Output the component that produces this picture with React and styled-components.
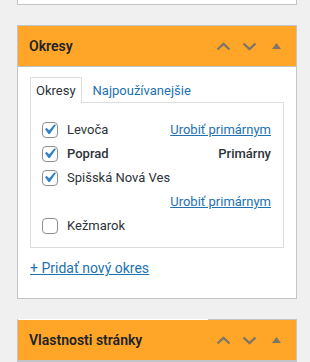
import styled, { createGlobalStyle } from 'styled-components';

const GlobalStyle = createGlobalStyle`
    body {
        margin: 0;
        background: #f0f0f1;
        font-family: Roboto, "Liberation Sans", sans-serif;
        color: #2c3338;
    }
`;

const okresy = [
    { name: 'Levoča', checked: true, action: 'link' },
    { name: 'Poprad', checked: true, action: 'primary' },
    { name: 'Spišská Nová Ves', checked: true, action: 'link' },
    { name: 'Kežmarok', checked: false },
];

function Chevron({ down }) {
    return (
        <svg width="15" height="9" viewBox="0 0 15 9">
            <polyline
                points={down ? '1.5,1.5 7.5,7.2 13.5,1.5' : '1.5,7.5 7.5,1.8 13.5,7.5'}
                fill="none"
                stroke="currentColor"
                strokeWidth="2.4"
            />
        </svg>
    );
}

function Triangle() {
    return (
        <svg width="9" height="6" viewBox="0 0 9 6">
            <polygon points="0,6 4.5,0 9,6" fill="currentColor" />
        </svg>
    );
}

function Header({ title }) {
    return (
        <Hlavicka>
            <h2>{title}</h2>
            <Ovladace>
                <Ikona>
                    <Chevron />
                </Ikona>
                <Ikona>
                    <Chevron down />
                </Ikona>
                <Ikona $small>
                    <Triangle />
                </Ikona>
            </Ovladace>
        </Hlavicka>
    );
}

function App() {
    return (
        <Stranka>
            <GlobalStyle />
            <PredchadzajuciBox />
            <Box>
                <Header title="Okresy" />
                <Obsah>
                    <Taby>
                        <Tab $active>Okresy</Tab>
                        <Tab>Najpoužívanejšie</Tab>
                    </Taby>
                    <Panel>
                        {okresy.map((o) => (
                            <Polozka key={o.name}>
                                <Label $bold={o.action === 'primary'}>
                                    <Checkbox>
                                        {o.checked && (
                                            <svg width="21" height="21" viewBox="0 0 20 20">
                                                <path
                                                    d="M14.83 4.89l1.34.94-5.81 8.38H9.02L5.78 9.67l1.34-1.25 2.57 2.4z"
                                                    fill="#3582c4"
                                                />
                                            </svg>
                                        )}
                                    </Checkbox>
                                    {o.name}
                                </Label>
                                {o.action === 'link' && <Akcia href="#">Urobiť primárnym</Akcia>}
                                {o.action === 'primary' && <Primarny>Primárny</Primarny>}
                            </Polozka>
                        ))}
                    </Panel>
                    <Pridat href="#">+ Pridať nový okres</Pridat>
                </Obsah>
            </Box>
            <Box $highlight>
                <Header title="Vlastnosti stránky" />
            </Box>
        </Stranka>
    );
}

export default App;

const Stranka = styled.div`
    padding: 0 13px 0 17px;
    display: flex;
    flex-direction: column;
    gap: 20px;
`;

const PredchadzajuciBox = styled.div`
    height: 4px;
    background: #fff;
    border: 1px solid #c3c4c7;
    border-top: none;
`;

const Box = styled.div`
    background: #fff;
    border: 1px solid #c3c4c7;
    ${(p) =>
        p.$highlight &&
        `
        border-top: none;
        padding-top: 1px;
        background: linear-gradient(to right, #fff 190px, #c3c4c7 190px) top / 100% 1px no-repeat, #ffa628;
    `}
`;

const Hlavicka = styled.div`
    height: 40px;
    background: #ffa628;
    border-bottom: 1px solid #c3c4c7;
    display: flex;
    align-items: center;
    justify-content: space-between;
    padding: 0 12px 0 11px;

    h2 {
        margin: 0;
        font-size: 14px;
        font-weight: 600;
        color: #1d2327;
        line-height: 20px;
    }
`;

const Ovladace = styled.div`
    display: flex;
    align-items: center;
    color: #7e7768;
`;

const Ikona = styled.span`
    display: flex;
    align-items: center;
    justify-content: center;
    width: ${(p) => (p.$small ? '16px' : '26px')};
    margin-left: ${(p) => (p.$small ? '6px' : '0')};
`;

const Obsah = styled.div`
    padding: 10px 12px 20px;
`;

const Taby = styled.div`
    display: flex;
    gap: 1px;
    margin-bottom: -1px;
    position: relative;
`;

const Tab = styled.a`
    height: 25px;
    line-height: 25px;
    padding: 0 5px;
    font-size: 13px;
    border: 1px solid ${(p) => (p.$active ? '#dcdcde' : 'transparent')};
    border-bottom: none;
    background: ${(p) => (p.$active ? '#fff' : 'transparent')};
    color: ${(p) => (p.$active ? '#2c3338' : '#2271b1')};
    margin-right: 4px;
`;

const Panel = styled.div`
    border: 1px solid #dcdcde;
    padding: 15px 12px 9px 11px;
`;

const Polozka = styled.div`
    display: flex;
    flex-wrap: wrap;
    align-items: center;
    justify-content: space-between;
    font-size: 13px;
    line-height: 24px;
`;

const Label = styled.label`
    display: flex;
    align-items: center;
    gap: 9px;
    color: #2c3338;
    font-weight: ${(p) => (p.$bold ? 500 : 400)};
`;

const Checkbox = styled.span`
    width: 14px;
    height: 14px;
    border: 1px solid #8c8f94;
    border-radius: 4px;
    display: flex;
    align-items: center;
    justify-content: center;
    background: #fff;

    svg {
        flex: none;
        margin: -2px 0 0 -1px;
    }
`;

const Akcia = styled.a`
    margin-left: auto;
    padding-left: 8px;
    color: #2271b1;
    text-decoration: underline;
`;

const Primarny = styled.span`
    margin-left: auto;
    font-weight: 500;
    color: #2c3338;
`;

const Pridat = styled.a`
    display: block;
    margin-top: 10px;
    font-size: 14px;
    line-height: 20px;
    color: #2271b1;
    text-decoration: underline;
`;
